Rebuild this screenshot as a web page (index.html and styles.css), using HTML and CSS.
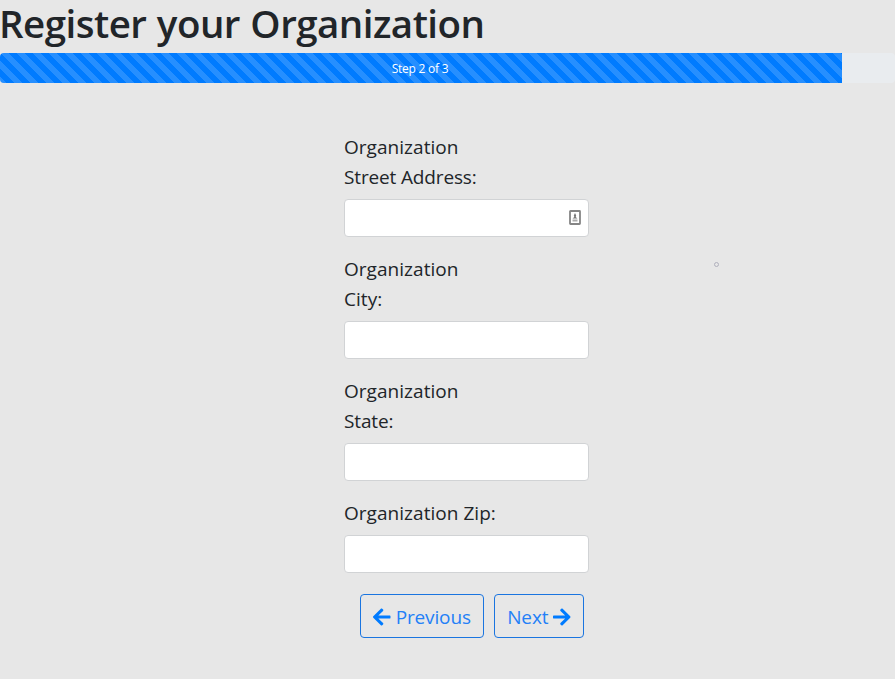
FILE: index.html
```html
<!DOCTYPE html>
<html lang="en">
<head>
<meta charset="utf-8">
<title>Register your Organization</title>
<link rel="stylesheet" href="styles.css">
</head>
<body>
<h1>Register your Organization</h1>
<div class="progress"><div class="progress-bar">Step 2 of 3</div></div>
<form class="form">
  <label for="street">Organization<br><span class="street">Street Address:</span></label>
  <div class="field">
    <input id="street" type="text">
    <svg class="contact" viewBox="0 0 12 15" width="12" height="15"><rect x="1" y="1" width="10" height="13" rx=".5" fill="#fff" stroke="#858585" stroke-width="1.800"/><path d="M6 3L7.200 5.500L6.700 7L8.500 8.500H3.500L5.300 7L4.800 5.500Z" fill="#777"/><path d="M3.500 9.500H8.500V11.500H3.500Z" fill="#aaa"/></svg>
  </div>
  <label for="city">Organization<br>City:</label>
  <div class="field"><input id="city" type="text"></div>
  <label for="state">Organization<br><span class="street">State:</span></label>
  <div class="field"><input id="state" type="text"></div>
  <label for="zip">Organization Zip:</label>
  <div class="field"><input id="zip" type="text"></div>
  <div class="actions">
    <button type="button" class="btn previous"><svg viewBox="0 0 448 512" width="17.500" height="20"><path fill="currentColor" d="M257.500 445.100l-22.200 22.200c-9.400 9.400-24.600 9.400-33.900 0L7 273c-9.400-9.400-9.400-24.600 0-33.900L201.400 44.700c9.400-9.400 24.600-9.400 33.900 0l22.200 22.200c9.500 9.500 9.300 25-.4 34.300L136.600 216H424c13.300 0 24 10.700 24 24v32c0 13.300-10.700 24-24 24H136.600l120.500 114.800c9.800 9.300 10 24.800.4 34.300z"/></svg><span>Previous</span></button>
    <button type="button" class="btn next"><span>Next</span><svg viewBox="0 0 448 512" width="17.500" height="20"><path fill="currentColor" d="M190.500 66.900l22.200-22.200c9.400-9.400 24.600-9.400 33.900 0L441 239c9.400 9.400 9.400 24.600 0 33.900L246.600 467.300c-9.400 9.400-24.600 9.400-33.900 0l-22.200-22.200c-9.500-9.500-9.300-25 .4-34.300L311.400 296H24c-13.300 0-24-10.700-24-24v-32c0-13.300 10.700-24 24-24h287.400L190.900 101.200c-9.800-9.300-10-24.800-.4-34.300z"/></svg></button>
  </div>
</form>
<span class="dot"></span>
</body>
</html>
```

FILE: styles.css
```css
* { box-sizing: border-box; }
body { margin: 0; background: #e7e7e7; color: #212529; font-family: "Open Sans", "Noto Sans", sans-serif; font-size: 20px; line-height: 30px; }
h1 { margin: 0; height: 53px; font-size: 38.5px; line-height: 46px; font-weight: 600; letter-spacing: -.53px; word-spacing: 1px; white-space: nowrap; text-indent: -1px; }
.progress { height: 30px; background: #e9ecef; border-radius: 4px; overflow: hidden; }
.progress-bar { width: 842px; height: 30px; padding: 1px 2px 0 0; color: #fff; font-size: 12px; text-align: center; letter-spacing: -.25px; background: linear-gradient(45deg, rgba(255,255,255,.15) 25%, transparent 25%, transparent 50%, rgba(255,255,255,.15) 50%, rgba(255,255,255,.15) 75%, transparent 75%) 0 0 / 16px 16px #007bff; }
.form { width: 245px; margin: 49px 0 0 344px; }
label { display: block; margin-bottom: 7px; font-size: 19px; letter-spacing: .04px; }
.street { letter-spacing: -.15px; }
.field { position: relative; height: 38px; margin-bottom: 17px; }
input { display: block; width: 100%; height: 38px; padding: 6px 12px; border: 1px solid #d1d3d5; border-radius: 4px; background: #fff; }
.contact { position: absolute; right: 8px; top: 11px; }
.actions { display: flex; gap: 10px; margin: 21px 0 0 16px; }
.btn { display: flex; align-items: center; justify-content: center; gap: 5px; height: 44px; padding: 1px 0 0; border: 1px solid #1a75e0; border-radius: 4px; background: transparent; color: #007bff; font: 19px/30px "Open Sans", sans-serif; letter-spacing: -.15px; }
.btn span { color: #2380f7; }
.previous { width: 124px; }
.next { width: 90px; }
.dot { position: absolute; left: 714px; top: 262px; width: 5px; height: 5px; border: 1px solid #b0b0bd; border-radius: 50%; }
```
